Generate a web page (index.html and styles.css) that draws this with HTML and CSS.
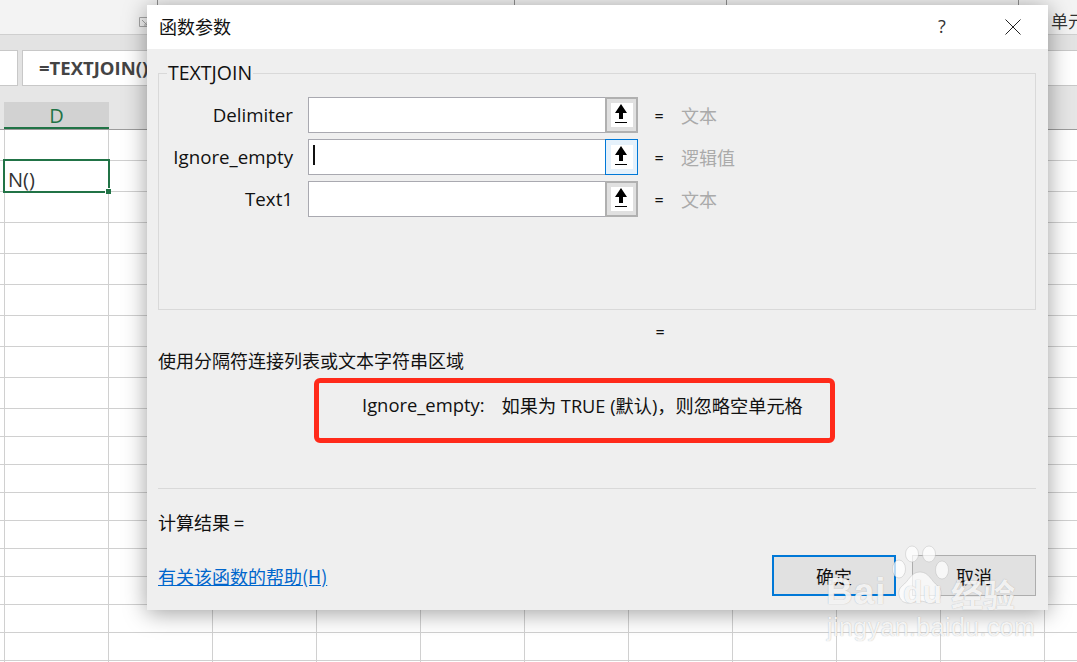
FILE: index.html
```html
<!DOCTYPE html>
<html lang="zh-CN">
<head>
<meta charset="utf-8">
<title>函数参数</title>
<link rel="stylesheet" href="styles.css">
</head>
<body>
<div class="sheet">
  <div class="ribbon">
    <svg class="launcher" width="9" height="10" viewBox="0 0 9 10"><path d="M8.500 .5H.5v9h8M3 3l5 5M8 5v3H5" fill="none" stroke="#a6a6a6"/></svg>
    <span class="ribbon-label">单元</span>
  </div>
  <div class="formula-strip">
    <div class="name-box"></div>
    <div class="formula-box">=TEXTJOIN()</div>
  </div>
  <div class="col-strip"><div class="col-d">D</div></div>
  <div class="grid">
    <div class="row tall"></div><div class="row tall"></div><div class="row tall"></div><div class="row tall"></div>
    <div class="row tall"></div><div class="row tall"></div><div class="row tall"></div><div class="row tall"></div>
    <div class="row tall"></div><div class="row"></div><div class="row"></div><div class="row"></div>
    <div class="row"></div><div class="row"></div><div class="row"></div><div class="row"></div>
    <div class="row"></div><div class="row"></div>
  </div>
</div>

<div class="cell-active">N()<span class="handle"></span></div>

<section class="dialog">
  <header class="titlebar">
    <span class="title">函数参数</span>
    <span class="help">?</span>
    <svg class="close" width="16" height="16" viewBox="0 0 16 16"><path d="M.5.5l15 15M15.500.5l-15 15" stroke="#222" stroke-width="1" fill="none"/></svg>
  </header>
  <div class="body">
    <fieldset class="args">
      <legend>TEXTJOIN</legend>
      <div class="arg">
        <label>Delimiter</label>
        <div class="input"></div>
        <button class="pick"><svg width="22" height="24" viewBox="0 0 22 24"><path d="M10 1L4 10h4v6h4v-6h4z" fill="#000"/><path d="M4 19.500h12" stroke="#000"/></svg></button>
        <span class="eq">=</span><span class="type">文本</span>
      </div>
      <div class="arg">
        <label>Ignore_empty</label>
        <div class="input"><i class="caret"></i></div>
        <button class="pick focus"><svg width="22" height="24" viewBox="0 0 22 24"><path d="M10 1L4 10h4v6h4v-6h4z" fill="#000"/><path d="M4 19.500h12" stroke="#000"/></svg></button>
        <span class="eq">=</span><span class="type">逻辑值</span>
      </div>
      <div class="arg">
        <label>Text1</label>
        <div class="input"></div>
        <button class="pick"><svg width="22" height="24" viewBox="0 0 22 24"><path d="M10 1L4 10h4v6h4v-6h4z" fill="#000"/><path d="M4 19.500h12" stroke="#000"/></svg></button>
        <span class="eq">=</span><span class="type">文本</span>
      </div>
    </fieldset>
    <div class="result-eq">=</div>
    <p class="desc">使用分隔符连接列表或文本字符串区域</p>
    <div class="callout"><span class="callout-name">Ignore_empty:</span><span class="callout-text">如果为 TRUE (默认)，则忽略空单元格</span></div>
    <hr class="sep">
    <p class="calc">计算结果 =</p>
    <div class="footer">
      <a class="help-link" href="#">有关该函数的帮助(H)</a>
      <button class="btn primary">确定</button>
      <button class="btn">取消</button>
    </div>
  </div>
</section>

<div class="watermark">
  <svg class="paw" width="58" height="60" viewBox="0 0 58 60">
    <g fill="#fff" fill-opacity=".72" stroke="#b5b5b5" stroke-opacity=".4">
      <ellipse cx="7" cy="24" rx="6.500" ry="9"/>
      <ellipse cx="20" cy="9" rx="6.500" ry="8"/>
      <ellipse cx="37" cy="9" rx="6.500" ry="8"/>
      <ellipse cx="50" cy="25" rx="6.500" ry="9"/>
      <path d="M28 27c9 0 11 9 18 14 6 5 3 17-6 17-5 0-8-2-12-2s-7 2-12 2c-9 0-12-12-6-17 7-5 9-14 18-14z"/>
    </g>
  </svg>
  <span class="wm-bai">Bai</span>
  <span class="wm-du">du</span>
  <span class="wm-jy">经验</span>
  <span class="wm-url">jingyan.baidu.com</span>
</div>
</body>
</html>
```
FILE: styles.css
```css
* { box-sizing: border-box; }
html, body { margin: 0; padding: 0; width: 1077px; height: 662px; overflow: hidden; background: #fff; }
body { font-family: "Open Sans", "Noto Sans CJK SC", sans-serif; color: #111; position: relative; }

.sheet { display: flex; flex-direction: column; height: 662px; }
.ribbon { height: 35px; background: #f3f3f3; border-bottom: 1px solid #cfcfcf; flex: none; display: flex; align-items: center; padding-left: 139px;
  background-image: linear-gradient(#8f8f8f, #8f8f8f), linear-gradient(#8f8f8f, #8f8f8f), linear-gradient(#8f8f8f, #8f8f8f), linear-gradient(#8f8f8f, #8f8f8f);
  background-size: 1px 6px; background-repeat: no-repeat; background-position: 157px 0, 514px 0, 726px 0, 1018px 0; }
.launcher { margin-top: 10px; flex: none; }
.ribbon-label { font-size: 17px; color: #333; width: 26px; overflow: hidden; white-space: nowrap; margin: 6px 0 0 auto; font-family: "Noto Sans CJK SC", sans-serif; }
.formula-strip { height: 51px; flex: none; background: #e3e3e3; display: flex; padding: 15px 0 0; gap: 4px; align-items: stretch; }
.name-box { width: 18px; height: 36px; background: #fff; border: 1px solid #c8c8c8; border-left: 0; }
.formula-box { flex: 1; height: 36px; background: #fff; border: 1px solid #c8c8c8; border-right: 0; padding-left: 16px; font-size: 18.500px; font-weight: 700; line-height: 33px; color: #444; white-space: nowrap; }
.col-strip { height: 44px; flex: none; background: #e6e6e6; border-bottom: 1px solid #9c9c9c; padding: 16px 0 0 4px; }
.col-d { width: 105px; height: 27px; background: #d2d2d2; border-bottom: 2px solid #217346; color: #217346; text-align: center; font-size: 20px; line-height: 28px; }
.grid { flex: 1; overflow: hidden; padding-top: 0;
  background-image: repeating-linear-gradient(90deg, #d0d0d0 0 1px, transparent 1px 104px); background-position: 4px 0; }
.row { height: 28px; border-bottom: 1px solid #d0d0d0; }
.row.tall { height: 31px; }

.cell-active { position: absolute; left: 3px; top: 159px; width: 107px; height: 34px; border: 2px solid #217346; background: #fff; font-size: 20px; line-height: 37px; padding-left: 3px; color: #333; }
.handle { position: absolute; right: -3px; bottom: -3px; width: 6px; height: 6px; background: #217346; border: 1px solid #fff; border-width: 1px 0 0 1px; }

.dialog { position: absolute; left: 147px; top: 5px; width: 901px; height: 605px; background: #efefef; box-shadow: 0 3px 22px rgba(0,0,0,.38); display: flex; flex-direction: column; }
.titlebar { height: 44px; flex: none; background: #fff; display: flex; align-items: center; padding: 0 27px 2px 12px; }
.title { font-family: "Noto Sans CJK SC", sans-serif; font-size: 18px; flex: 1; color: #111; }
.help { font-size: 18px; width: 10px; margin-right: 57px; color: #333; }
.close { flex: none; margin-top: 2px; }
.body { flex: 1; padding: 12px 12px 14px 11px; display: flex; flex-direction: column; font-size: 18.700px; color: #111; }

.args { margin: 0; padding: 12px 0 0; height: 249px; border: 1px solid #d9d9d9; display: flex; flex-direction: column; gap: 6px; min-width: 0; }
.args legend { margin-left: 8px; padding: 0 1px; font-size: 19.500px; line-height: 24px; height: 24px; }
.arg { display: flex; align-items: center; height: 36px; }
.arg label { width: 134px; text-align: right; flex: none; padding-bottom: 2px; }
.input { width: 297px; height: 36px; margin-left: 15px; background: #fff; border: 1px solid #a9a9b0; border-right: 0; padding: 5px 0 0 4px; }
.caret { display: block; width: 1.500px; height: 20px; background: #111; }
.pick { width: 33px; height: 36px; padding: 4px 0 0; background: #e0e0e0; border: 2px solid #b0b0b0; display: flex; align-items: flex-start; justify-content: center; }
.pick svg { background: #fff; display: block; flex: none; }
.pick.focus { border: 1px solid #0078d7; background: #e5f1fb; padding-top: 5px; }
.eq { width: 10px; margin-left: 16px; text-align: center; font-size: 16px; padding-top: 1px; }
.type { margin-left: 17px; color: #aaa; font-family: "Noto Sans CJK SC", sans-serif; font-size: 18px; }

.result-eq { margin: 10px 0 0 497px; height: 24px; line-height: 24px; width: 10px; text-align: center; font-size: 16px; }
.desc { margin: 3px 0 0; height: 26px; line-height: 26px; font-family: "Noto Sans CJK SC", sans-serif; font-size: 18px; }
.callout { margin: 5px 0 0 156px; width: 521px; height: 65px; border: 5px solid #ff2a1a; border-radius: 6px; display: flex; align-items: center; padding: 0 0 12px 43px; gap: 17px; white-space: nowrap; font-size: 18.400px; }
.callout-text { font-size: 18.200px; }
.sep { margin: 45px 0 0; border: 0; border-top: 1px solid #d9d9d9; width: 878px; }
.calc { margin: 20px 0 0; height: 26px; line-height: 26px; font-family: "Noto Sans CJK SC", sans-serif; font-size: 18px; }
.footer { margin-top: 20px; display: flex; align-items: flex-start; }
.help-link { color: #0066cc; font-family: "Noto Sans CJK SC", sans-serif; font-size: 18px; line-height: 42px; flex: none; width: 614px; text-decoration: underline; }
.btn { width: 124px; height: 41px; padding: 0; background: #e1e1e1; border: 1px solid #adadad; font-family: "Noto Sans CJK SC", sans-serif; font-size: 18px; color: #111; margin-right: 16px; }
.btn:last-child { margin-right: 0; }
.btn.primary { border: 2px solid #0078d7; }

.watermark { position: absolute; left: 820px; top: 540px; width: 257px; height: 122px; color: rgba(255,255,255,.85); text-shadow: 0 0 1px rgba(130,130,130,.6); font-family: "Liberation Sans", sans-serif; pointer-events: none; }
.paw { position: absolute; left: 72px; top: 5px; }
.wm-bai, .wm-du, .wm-jy, .wm-url { position: absolute; white-space: nowrap; line-height: 1; }
.wm-bai { left: 6px; top: 33px; font-size: 37px; font-weight: 700; letter-spacing: 1px; }
.wm-du { left: 83px; top: 36px; font-size: 32px; font-weight: 700; color: rgba(255,255,255,.9); }
.wm-jy { left: 131px; top: 37px; font-size: 32px; font-family: "Noto Sans CJK SC", sans-serif; font-weight: 700; }
.wm-url { left: 7px; top: 75px; font-size: 25px; letter-spacing: .4px; }
```
